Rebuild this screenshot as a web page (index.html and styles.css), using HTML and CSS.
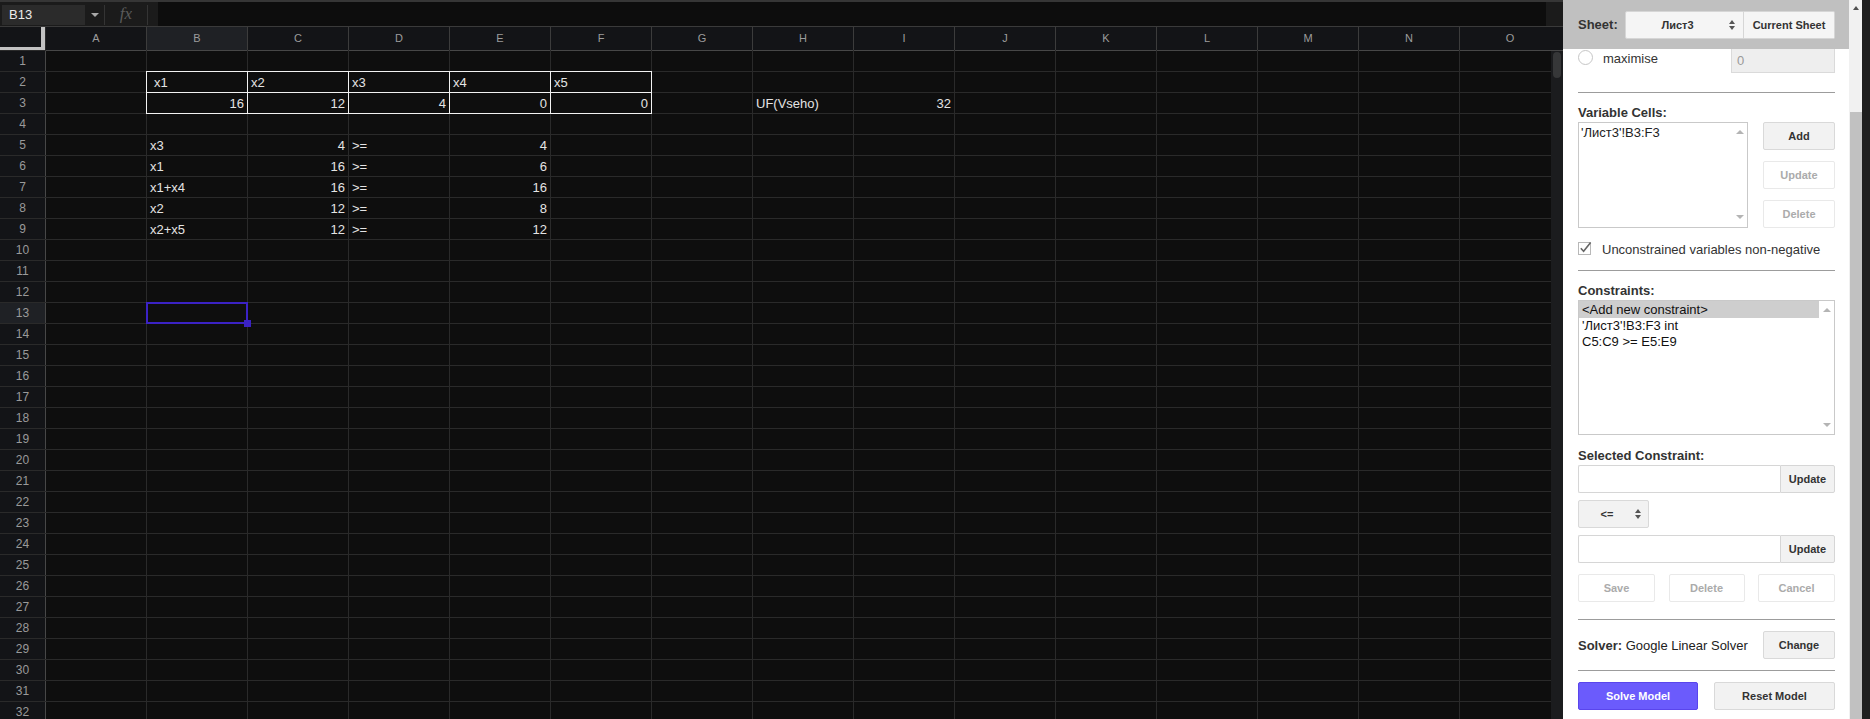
FILE: index.html
```html
<!DOCTYPE html>
<html>
<head>
<meta charset="utf-8">
<title>Solver</title>
<link rel="stylesheet" href="styles.css">
</head>
<body>
<div class="app">
  <div class="sheet">
    <div class="toolbar">
      <div class="namebox">B13</div>
      <div class="nbarrow"><span class="tri"></span></div>
      <div class="sep"></div>
      <div class="fx">fx</div>
      <div class="sep"></div>
      <div class="formula"></div>
    </div>
    <div class="gridwrap">
      <div class="grid">
        <div class="corner"></div><div class="ch">A</div><div class="ch on">B</div><div class="ch">C</div><div class="ch">D</div><div class="ch">E</div><div class="ch">F</div><div class="ch">G</div><div class="ch">H</div><div class="ch">I</div><div class="ch">J</div><div class="ch">K</div><div class="ch">L</div><div class="ch">M</div><div class="ch">N</div><div class="ch">O</div>

        <div class="rh">1</div><div class="c"></div><div class="c"></div><div class="c"></div><div class="c"></div><div class="c"></div><div class="c"></div><div class="c"></div><div class="c"></div><div class="c"></div><div class="c"></div><div class="c"></div><div class="c"></div><div class="c"></div><div class="c"></div><div class="c"></div>

        <div class="rh">2</div><div class="c"></div><div class="c bx ind">x1</div><div class="c bx">x2</div><div class="c bx">x3</div><div class="c bx">x4</div><div class="c bx">x5</div><div class="c"></div><div class="c"></div><div class="c"></div><div class="c"></div><div class="c"></div><div class="c"></div><div class="c"></div><div class="c"></div><div class="c"></div>

        <div class="rh">3</div><div class="c"></div><div class="c bx n">16</div><div class="c bx n">12</div><div class="c bx n">4</div><div class="c bx n">0</div><div class="c bx n">0</div><div class="c"></div><div class="c">UF(Vseho)</div><div class="c n">32</div><div class="c"></div><div class="c"></div><div class="c"></div><div class="c"></div><div class="c"></div><div class="c"></div>

        <div class="rh">4</div><div class="c"></div><div class="c"></div><div class="c"></div><div class="c"></div><div class="c"></div><div class="c"></div><div class="c"></div><div class="c"></div><div class="c"></div><div class="c"></div><div class="c"></div><div class="c"></div><div class="c"></div><div class="c"></div><div class="c"></div>

        <div class="rh">5</div><div class="c"></div><div class="c">x3</div><div class="c n">4</div><div class="c">&gt;=</div><div class="c n">4</div><div class="c"></div><div class="c"></div><div class="c"></div><div class="c"></div><div class="c"></div><div class="c"></div><div class="c"></div><div class="c"></div><div class="c"></div><div class="c"></div>

        <div class="rh">6</div><div class="c"></div><div class="c">x1</div><div class="c n">16</div><div class="c">&gt;=</div><div class="c n">6</div><div class="c"></div><div class="c"></div><div class="c"></div><div class="c"></div><div class="c"></div><div class="c"></div><div class="c"></div><div class="c"></div><div class="c"></div><div class="c"></div>

        <div class="rh">7</div><div class="c"></div><div class="c">x1+x4</div><div class="c n">16</div><div class="c">&gt;=</div><div class="c n">16</div><div class="c"></div><div class="c"></div><div class="c"></div><div class="c"></div><div class="c"></div><div class="c"></div><div class="c"></div><div class="c"></div><div class="c"></div><div class="c"></div>

        <div class="rh">8</div><div class="c"></div><div class="c">x2</div><div class="c n">12</div><div class="c">&gt;=</div><div class="c n">8</div><div class="c"></div><div class="c"></div><div class="c"></div><div class="c"></div><div class="c"></div><div class="c"></div><div class="c"></div><div class="c"></div><div class="c"></div><div class="c"></div>

        <div class="rh">9</div><div class="c"></div><div class="c">x2+x5</div><div class="c n">12</div><div class="c">&gt;=</div><div class="c n">12</div><div class="c"></div><div class="c"></div><div class="c"></div><div class="c"></div><div class="c"></div><div class="c"></div><div class="c"></div><div class="c"></div><div class="c"></div><div class="c"></div>

        <div class="rh">10</div><div class="c"></div><div class="c"></div><div class="c"></div><div class="c"></div><div class="c"></div><div class="c"></div><div class="c"></div><div class="c"></div><div class="c"></div><div class="c"></div><div class="c"></div><div class="c"></div><div class="c"></div><div class="c"></div><div class="c"></div>
        <div class="rh">11</div><div class="c"></div><div class="c"></div><div class="c"></div><div class="c"></div><div class="c"></div><div class="c"></div><div class="c"></div><div class="c"></div><div class="c"></div><div class="c"></div><div class="c"></div><div class="c"></div><div class="c"></div><div class="c"></div><div class="c"></div>
        <div class="rh">12</div><div class="c"></div><div class="c"></div><div class="c"></div><div class="c"></div><div class="c"></div><div class="c"></div><div class="c"></div><div class="c"></div><div class="c"></div><div class="c"></div><div class="c"></div><div class="c"></div><div class="c"></div><div class="c"></div><div class="c"></div>

        <div class="rh on">13</div><div class="c"></div><div class="c sel"></div><div class="c"></div><div class="c"></div><div class="c"></div><div class="c"></div><div class="c"></div><div class="c"></div><div class="c"></div><div class="c"></div><div class="c"></div><div class="c"></div><div class="c"></div><div class="c"></div><div class="c"></div>

        <div class="rh">14</div><div class="c"></div><div class="c"></div><div class="c"></div><div class="c"></div><div class="c"></div><div class="c"></div><div class="c"></div><div class="c"></div><div class="c"></div><div class="c"></div><div class="c"></div><div class="c"></div><div class="c"></div><div class="c"></div><div class="c"></div>
        <div class="rh">15</div><div class="c"></div><div class="c"></div><div class="c"></div><div class="c"></div><div class="c"></div><div class="c"></div><div class="c"></div><div class="c"></div><div class="c"></div><div class="c"></div><div class="c"></div><div class="c"></div><div class="c"></div><div class="c"></div><div class="c"></div>
        <div class="rh">16</div><div class="c"></div><div class="c"></div><div class="c"></div><div class="c"></div><div class="c"></div><div class="c"></div><div class="c"></div><div class="c"></div><div class="c"></div><div class="c"></div><div class="c"></div><div class="c"></div><div class="c"></div><div class="c"></div><div class="c"></div>
        <div class="rh">17</div><div class="c"></div><div class="c"></div><div class="c"></div><div class="c"></div><div class="c"></div><div class="c"></div><div class="c"></div><div class="c"></div><div class="c"></div><div class="c"></div><div class="c"></div><div class="c"></div><div class="c"></div><div class="c"></div><div class="c"></div>
        <div class="rh">18</div><div class="c"></div><div class="c"></div><div class="c"></div><div class="c"></div><div class="c"></div><div class="c"></div><div class="c"></div><div class="c"></div><div class="c"></div><div class="c"></div><div class="c"></div><div class="c"></div><div class="c"></div><div class="c"></div><div class="c"></div>
        <div class="rh">19</div><div class="c"></div><div class="c"></div><div class="c"></div><div class="c"></div><div class="c"></div><div class="c"></div><div class="c"></div><div class="c"></div><div class="c"></div><div class="c"></div><div class="c"></div><div class="c"></div><div class="c"></div><div class="c"></div><div class="c"></div>
        <div class="rh">20</div><div class="c"></div><div class="c"></div><div class="c"></div><div class="c"></div><div class="c"></div><div class="c"></div><div class="c"></div><div class="c"></div><div class="c"></div><div class="c"></div><div class="c"></div><div class="c"></div><div class="c"></div><div class="c"></div><div class="c"></div>
        <div class="rh">21</div><div class="c"></div><div class="c"></div><div class="c"></div><div class="c"></div><div class="c"></div><div class="c"></div><div class="c"></div><div class="c"></div><div class="c"></div><div class="c"></div><div class="c"></div><div class="c"></div><div class="c"></div><div class="c"></div><div class="c"></div>
        <div class="rh">22</div><div class="c"></div><div class="c"></div><div class="c"></div><div class="c"></div><div class="c"></div><div class="c"></div><div class="c"></div><div class="c"></div><div class="c"></div><div class="c"></div><div class="c"></div><div class="c"></div><div class="c"></div><div class="c"></div><div class="c"></div>
        <div class="rh">23</div><div class="c"></div><div class="c"></div><div class="c"></div><div class="c"></div><div class="c"></div><div class="c"></div><div class="c"></div><div class="c"></div><div class="c"></div><div class="c"></div><div class="c"></div><div class="c"></div><div class="c"></div><div class="c"></div><div class="c"></div>
        <div class="rh">24</div><div class="c"></div><div class="c"></div><div class="c"></div><div class="c"></div><div class="c"></div><div class="c"></div><div class="c"></div><div class="c"></div><div class="c"></div><div class="c"></div><div class="c"></div><div class="c"></div><div class="c"></div><div class="c"></div><div class="c"></div>
        <div class="rh">25</div><div class="c"></div><div class="c"></div><div class="c"></div><div class="c"></div><div class="c"></div><div class="c"></div><div class="c"></div><div class="c"></div><div class="c"></div><div class="c"></div><div class="c"></div><div class="c"></div><div class="c"></div><div class="c"></div><div class="c"></div>
        <div class="rh">26</div><div class="c"></div><div class="c"></div><div class="c"></div><div class="c"></div><div class="c"></div><div class="c"></div><div class="c"></div><div class="c"></div><div class="c"></div><div class="c"></div><div class="c"></div><div class="c"></div><div class="c"></div><div class="c"></div><div class="c"></div>
        <div class="rh">27</div><div class="c"></div><div class="c"></div><div class="c"></div><div class="c"></div><div class="c"></div><div class="c"></div><div class="c"></div><div class="c"></div><div class="c"></div><div class="c"></div><div class="c"></div><div class="c"></div><div class="c"></div><div class="c"></div><div class="c"></div>
        <div class="rh">28</div><div class="c"></div><div class="c"></div><div class="c"></div><div class="c"></div><div class="c"></div><div class="c"></div><div class="c"></div><div class="c"></div><div class="c"></div><div class="c"></div><div class="c"></div><div class="c"></div><div class="c"></div><div class="c"></div><div class="c"></div>
        <div class="rh">29</div><div class="c"></div><div class="c"></div><div class="c"></div><div class="c"></div><div class="c"></div><div class="c"></div><div class="c"></div><div class="c"></div><div class="c"></div><div class="c"></div><div class="c"></div><div class="c"></div><div class="c"></div><div class="c"></div><div class="c"></div>
        <div class="rh">30</div><div class="c"></div><div class="c"></div><div class="c"></div><div class="c"></div><div class="c"></div><div class="c"></div><div class="c"></div><div class="c"></div><div class="c"></div><div class="c"></div><div class="c"></div><div class="c"></div><div class="c"></div><div class="c"></div><div class="c"></div>
        <div class="rh">31</div><div class="c"></div><div class="c"></div><div class="c"></div><div class="c"></div><div class="c"></div><div class="c"></div><div class="c"></div><div class="c"></div><div class="c"></div><div class="c"></div><div class="c"></div><div class="c"></div><div class="c"></div><div class="c"></div><div class="c"></div>
        <div class="rh">32</div><div class="c"></div><div class="c"></div><div class="c"></div><div class="c"></div><div class="c"></div><div class="c"></div><div class="c"></div><div class="c"></div><div class="c"></div><div class="c"></div><div class="c"></div><div class="c"></div><div class="c"></div><div class="c"></div><div class="c"></div>
      </div>
      <div class="vscroll">
        <div class="vhead"></div>
        <div class="vthumb"></div>
      </div>
    </div>
  </div>

  <div class="panel">
    <div class="pmain">
      <div class="phead">
        <span class="plabel">Sheet:</span>
        <div class="sheetsel"><span class="selval">Лист3</span><span class="updown"><i class="up"></i><i class="dn"></i></span></div>
        <div class="curbtn">Current Sheet</div>
      </div>
      <div class="pbody">
        <div class="objrow">
          <span class="radio"></span>
          <span class="objtext">maximise</span>
          <div class="numin">0</div>
        </div>
        <div class="hr hr1"></div>

        <div class="sec">Variable Cells:</div>
        <div class="varrow">
          <div class="ta">
            <div class="tatext">'Лист3'!B3:F3</div>
            <div class="mscroll"><i class="sup"></i><i class="sdn"></i></div>
          </div>
          <div class="btncol">
            <div class="btn">Add</div>
            <div class="btn dis">Update</div>
            <div class="btn dis">Delete</div>
          </div>
        </div>

        <div class="chkrow">
          <svg class="chk" width="15" height="16" viewBox="0 0 15 16"><rect x="0.5" y="2.5" width="12" height="12" fill="#fff" stroke="#b8b8b8"/><path d="M2.8 8.2 L5.6 11.2 L12.6 2.6" fill="none" stroke="#666" stroke-width="1.6"/></svg>
          <span class="chklabel">Unconstrained variables non-negative</span>
        </div>
        <div class="hr hr2"></div>

        <div class="sec">Constraints:</div>
        <div class="listbox">
          <div class="opts">
            <div class="opt hl">&lt;Add new constraint&gt;</div>
            <div class="opt">'Лист3'!B3:F3 int</div>
            <div class="opt">C5:C9 &gt;= E5:E9</div>
          </div>
          <div class="mscroll lscroll"><i class="sup"></i><i class="sdn"></i></div>
        </div>

        <div class="sec sec3">Selected Constraint:</div>
        <div class="inrow"><div class="inp"></div><div class="upd">Update</div></div>
        <div class="opsel"><span class="opval">&lt;=</span><span class="updown"><i class="up"></i><i class="dn"></i></span></div>
        <div class="inrow inrow2"><div class="inp"></div><div class="upd">Update</div></div>
        <div class="actrow">
          <div class="btn dis wsave">Save</div>
          <div class="btn dis wdel">Delete</div>
          <div class="btn dis wsave">Cancel</div>
        </div>
        <div class="hr hr3"></div>

        <div class="solverrow">
          <span class="solvtxt"><b>Solver:</b> Google Linear Solver</span>
          <div class="btn wchange">Change</div>
        </div>
        <div class="hr hr4"></div>

        <div class="bottomrow">
          <div class="btn primary">Solve Model</div>
          <div class="btn wreset">Reset Model</div>
        </div>
      </div>
    </div>
    <div class="pscroll">
      <i class="parrow"></i>
      <div class="pthumb"></div>
    </div>
    <div class="pedge"></div>
  </div>
</div>
</body>
</html>
```

FILE: styles.css
```css
* { box-sizing: border-box; margin: 0; padding: 0; }
html, body { width: 1870px; height: 719px; overflow: hidden; }
body {
  background: #0e0e0e;
  font-family: "Liberation Sans", Arial, sans-serif;
}
.app { display: flex; height: 719px; }

/* ---------- spreadsheet ---------- */
.sheet { width: 1563px; flex: none; display: flex; flex-direction: column; overflow: hidden; }
.toolbar {
  height: 26px; flex: none; display: flex;
  background: #1b1b1b; border-top: 2px solid #363636;
}
.namebox {
  margin: 3px 0 1px 2px; width: 83px; background: #2b2b2b;
  color: #ececec; font-size: 13px; line-height: 20px; padding-left: 7px;
}
.nbarrow { width: 19px; display: flex; align-items: center; justify-content: center; }
.tri { width: 0; height: 0; border-left: 4px solid transparent; border-right: 4px solid transparent; border-top: 4px solid #a8a8a8; margin-top: 1px; }
.sep { width: 1px; background: #343434; margin: 3px 0 1px; }
.fx {
  width: 42px; text-align: center; color: #5a5a5a;
  font-family: "Liberation Serif", serif; font-style: italic; font-size: 17px; line-height: 23px;
}
.formula { flex: 1; margin: 0 17px 0 10px; background: #0d0d0d; }

.gridwrap { flex: 1; min-height: 0; display: flex; border-top: 1px solid #3a3a3a; }
.grid {
  width: 1551px; flex: none; overflow: hidden;
  display: grid;
  grid-template-columns: 45px repeat(15, 100px);
  grid-template-rows: 23px repeat(32, 20px);
  gap: 1px;
  background: #2a2a2a;
  align-content: start;
}
.corner { background: #131417; box-shadow: inset -4px -3px 0 #c2c2c2; }
.ch {
  background: #131417; color: #9c9c9c; font-size: 11px; line-height: 23px; text-align: center;
  box-shadow: 1px 0 0 #3c3c3c, 0 1px 0 #474747;
}
.rh {
  background: #131417; color: #9a9a9a; font-size: 12px; line-height: 21px; text-align: center;
  box-shadow: 1px 0 0 #474747;
}
.ch.on, .rh.on { background: #1f2125; }
.c {
  background: #0e0e0e; color: #e4e4e4; font-size: 13px; line-height: 22px;
  padding: 0 3px; white-space: nowrap;
}
.c.n { text-align: right; }
.c.ind { padding-left: 7px; }
.c.bx { box-shadow: 0 0 0 1px #f2f2f2; }
.c.sel { position: relative; box-shadow: 0 0 0 1px #3b22c4, inset 0 0 0 1px #3b22c4; }
.c.sel::after {
  content: ""; position: absolute; right: -4px; bottom: -4px;
  width: 7px; height: 7px; background: #3b22c4;
}

.vscroll { width: 12px; flex: none; background: #1b1c1e; display: flex; flex-direction: column; align-items: center; }
.vhead { width: 12px; height: 24px; background: #131417; border-bottom: 1px solid #474747; flex: none; }
.vthumb { width: 8px; height: 26px; margin-top: 1px; border-radius: 4px; background: #363738; }

/* ---------- side panel ---------- */
.panel { width: 307px; flex: none; display: flex; background: #fff; }
.pmain { width: 286px; flex: none; display: flex; flex-direction: column; color: #333; font-size: 13px; }
.phead {
  height: 49px; flex: none; background: #c0c0c0;
  display: flex; align-items: center; padding-left: 15px;
  position: relative; z-index: 1;
}
.plabel { font-weight: bold; width: 47px; color: #333; }
.sheetsel {
  width: 119px; height: 28px; display: flex; align-items: center;
  background: #f5f5f5; border: 1px solid #d6d6d6; border-radius: 2px 0 0 2px;
  font-size: 11px; font-weight: bold; color: #333;
}
.selval { width: 103px; text-align: center; }
.updown { display: flex; flex-direction: column; align-items: center; gap: 2px; }
.updown .up { width: 0; height: 0; border-left: 3.5px solid transparent; border-right: 3.5px solid transparent; border-bottom: 4px solid #555; }
.updown .dn { width: 0; height: 0; border-left: 3.5px solid transparent; border-right: 3.5px solid transparent; border-top: 4px solid #555; }
.curbtn {
  width: 91px; height: 28px; display: flex; align-items: center; justify-content: center;
  background: #f5f5f5; border: 1px solid #d6d6d6; border-left: none; border-radius: 0 2px 2px 0;
  font-size: 11px; font-weight: bold; color: #333;
}

.pbody { padding: 0 14px 0 15px; margin-top: -2px; display: flex; flex-direction: column; }
.objrow { display: flex; align-items: flex-start; height: 26px; }
.radio { width: 15px; height: 15px; margin-top: 3px; border: 1px solid #c6c6c6; border-radius: 50%; background: #fff; }
.objtext { margin-left: 10px; line-height: 23px; color: #333; }
.numin {
  margin-left: auto; width: 104px; height: 26px;
  background: #eeeeee; border: 1px solid #dadada;
  color: #9a9a9a; padding-left: 5px; line-height: 26px;
}
.hr { height: 1px; background: #9c9c9c; flex: none; }
.hr1 { margin-top: 19px; }
.sec { font-weight: bold; line-height: 16px; margin: 12px 0 1px; color: #333; }
.sec3 { margin-top: 13px; }

.varrow { display: flex; justify-content: space-between; height: 106px; }
.ta { width: 170px; height: 106px; border: 1px solid #c9c9c9; display: flex; }
.tatext { flex: 1; padding: 2px 2px; line-height: 16px; color: #222; }
.mscroll { width: 15px; flex: none; display: flex; flex-direction: column; align-items: center; justify-content: space-between; padding: 7px 0 8px; }
.mscroll .sup { width: 0; height: 0; border-left: 4px solid transparent; border-right: 4px solid transparent; border-bottom: 4px solid #b4b4b4; }
.mscroll .sdn { width: 0; height: 0; border-left: 4px solid transparent; border-right: 4px solid transparent; border-top: 4px solid #b4b4b4; }
.btncol { width: 72px; display: flex; flex-direction: column; gap: 11px; }
.btn {
  height: 28px; display: flex; align-items: center; justify-content: center;
  background: #f2f2f2; border: 1px solid #d9d9d9; border-radius: 2px;
  font-size: 11px; font-weight: bold; color: #333;
}
.btn.dis { background: #fff; border-color: #e9e9e9; color: #ababab; }

.chkrow { display: flex; align-items: flex-start; margin-top: 12px; height: 20px; }
.chk { margin-top: 0px; flex: none; }
.chklabel { margin-left: 9px; line-height: 20px; color: #333; }
.hr2 { margin-top: 10px; }

.listbox { height: 135px; border: 1px solid #c9c9c9; display: flex; }
.opts { flex: 1; }
.opt { line-height: 16px; padding-left: 3px; color: #111; white-space: nowrap; }
.opt.hl { background: #cecece; line-height: 17px; }
.lscroll { padding: 7px 0 7px; }

.inrow { display: flex; height: 28px; }
.inrow2 { margin-top: 7px; }
.inp { flex: 1; border: 1px solid #d6d6d6; border-right: none; background: #fff; border-radius: 2px 0 0 2px; }
.upd {
  width: 55px; display: flex; align-items: center; justify-content: center;
  background: #f2f2f2; border: 1px solid #d6d6d6; border-radius: 0 2px 2px 0;
  font-size: 11px; font-weight: bold; color: #333;
}
.opsel {
  margin-top: 7px; width: 71px; height: 28px; display: flex; align-items: center;
  background: #f2f2f2; border: 1px solid #d9d9d9; border-radius: 2px;
  font-size: 11px; font-weight: bold; color: #333;
}
.opval { width: 56px; text-align: center; }
.actrow { margin-top: 11px; display: flex; justify-content: space-between; }
.wsave { width: 77px; }
.wdel { width: 76px; }
.hr3 { margin-top: 17px; }

.solverrow { margin-top: 11px; display: flex; align-items: center; height: 28px; }
.solvtxt { color: #222; }
.solvtxt b { color: #333; }
.wchange { margin-left: auto; width: 72px; }
.hr4 { margin-top: 11px; }

.bottomrow { margin-top: 11px; display: flex; justify-content: space-between; }
.btn.primary { width: 120px; background: #6b5bfc; border-color: #5a45ec; color: #fff; }
.wreset { width: 121px; }

.pscroll { width: 13px; flex: none; background: #f1f1f1; display: flex; flex-direction: column; align-items: flex-end; }
.parrow {
  width: 0; height: 0; margin: 6px 3px 0 0;
  border-left: 3.5px solid transparent; border-right: 3.5px solid transparent; border-bottom: 4px solid #505050;
}
.pthumb { width: 12px; margin-top: 102px; flex: 1; background: #c1c1c1; }
.pedge { width: 8px; flex: none; background: #1f1f1f; }
```
